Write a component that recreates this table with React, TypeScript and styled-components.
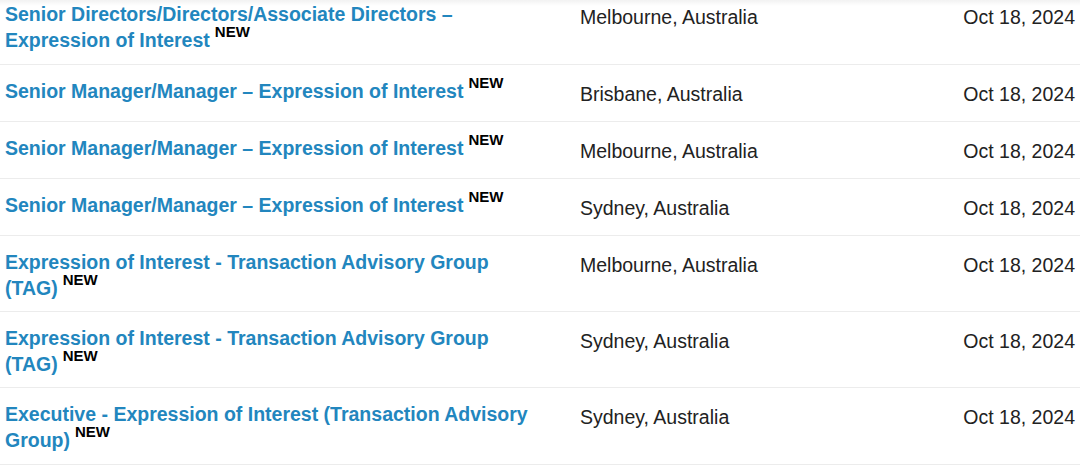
import React from "react";
import styled, { createGlobalStyle } from "styled-components";

const GlobalStyle = createGlobalStyle`
  html, body {
    margin: 0;
    padding: 0;
    background: #ffffff;
    overflow: hidden;
  }
  body {
    font-family: "Liberation Sans", Arial, sans-serif;
  }
`;

const Page = styled.div`
  position: relative;
  width: 1080px;
  height: 471px;
  overflow: hidden;
  background: #fff;

  &::before {
    content: "";
    position: absolute;
    left: 0;
    right: 0;
    top: 0;
    height: 6px;
    background: linear-gradient(rgba(0, 0, 0, 0.05), rgba(0, 0, 0, 0));
    pointer-events: none;
  }
`;

// list is scrolled a little, first row is cut at the top
const List = styled.div`
  margin-top: -12px;
`;

const Row = styled.div<{ $h: number }>`
  display: grid;
  grid-template-columns: 540px 1fr auto;
  column-gap: 35px;
  padding: 13px 5px 0 5px;
  border-bottom: 1px solid #ececec;
  box-sizing: border-box;
  height: ${(p) => p.$h}px;
`;

const Title = styled.a`
  color: #2286be;
  font-size: 19.5px;
  font-weight: 700;
  line-height: 26px;
  text-decoration: none;
`;

const Badge = styled.sup`
  color: #000;
  font-size: 15px;
  font-weight: 700;
  line-height: 0;
  vertical-align: 10px;
  margin-left: 5px;
`;

const Cell = styled.div`
  color: #222;
  font-size: 19.5px;
  line-height: 26px;
  padding-top: 3px;
  white-space: nowrap;
`;

const DateCell = styled(Cell)`
  text-align: right;
`;

const jobs = [
  {
    title: "Senior Directors/Directors/Associate Directors – Expression of Interest",
    location: "Melbourne, Australia",
    h: 77,
  },
  { title: "Senior Manager/Manager – Expression of Interest", location: "Brisbane, Australia", h: 57 },
  { title: "Senior Manager/Manager – Expression of Interest", location: "Melbourne, Australia", h: 57 },
  { title: "Senior Manager/Manager – Expression of Interest", location: "Sydney, Australia", h: 57 },
  {
    title: "Expression of Interest - Transaction Advisory Group (TAG)",
    location: "Melbourne, Australia",
    h: 76,
  },
  {
    title: "Expression of Interest - Transaction Advisory Group (TAG)",
    location: "Sydney, Australia",
    h: 76,
  },
  {
    title: "Executive - Expression of Interest (Transaction Advisory Group)",
    location: "Sydney, Australia",
    h: 77,
  },
];

const App: React.FC = () => {
  return (
    <Page>
      <GlobalStyle />
      <List>
        {jobs.map((job, i) => (
          <Row key={i} $h={job.h}>
            <div>
              <Title href="#">{job.title}</Title>
              <Badge>NEW</Badge>
            </div>
            <Cell>{job.location}</Cell>
            <DateCell>Oct 18, 2024</DateCell>
          </Row>
        ))}
      </List>
    </Page>
  );
};

export default App;
